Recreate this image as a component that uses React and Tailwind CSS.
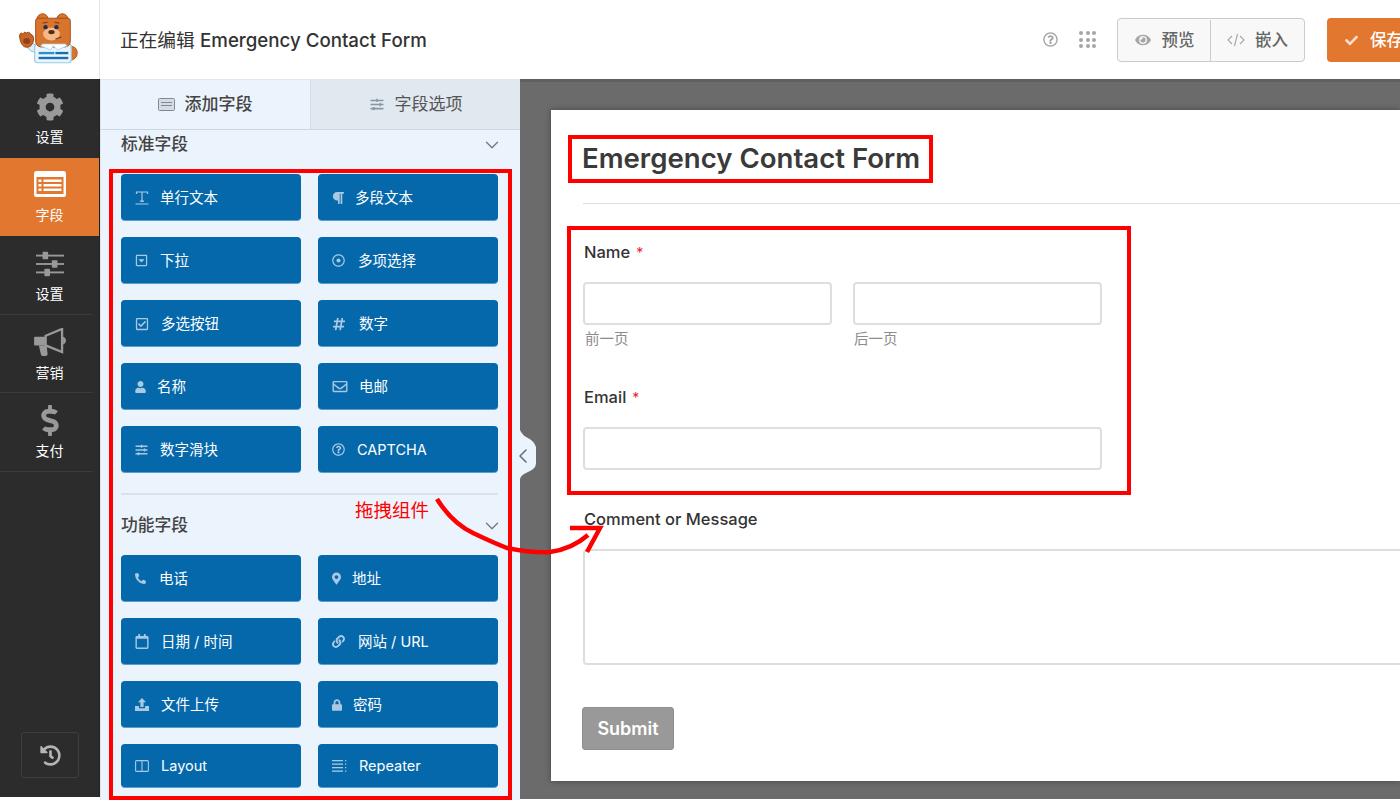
import React from "react";
import {
  FaCog, FaSlidersH, FaDollarSign, FaHistory, FaParagraph, FaHashtag, FaUser,
  FaPhoneAlt, FaMapMarkerAlt, FaLink, FaLock, FaEye, FaCheck,
} from "react-icons/fa";
import { FaRegCaretSquareDown, FaRegDotCircle, FaRegCheckSquare, FaRegEnvelope, FaRegQuestionCircle, FaRegCalendar } from "react-icons/fa";
import { ChevronDown, ChevronLeft } from "lucide-react";

const FieldsIcon = ({ className, fg = "#e27730" }) => (
  <svg viewBox="0 0 32 26" className={className}>
    <rect x="0" y="0" width="32" height="26" rx="2.5" fill="currentColor" />
    <rect x="2.5" y="6" width="27" height="17" fill={fg} />
    <g fill="currentColor">
      <rect x="4.5" y="8.5" width="3" height="2.5" /><rect x="9.5" y="8.5" width="18" height="2.5" />
      <rect x="4.5" y="13" width="3" height="2.5" /><rect x="9.5" y="13" width="18" height="2.5" />
      <rect x="4.5" y="17.5" width="3" height="2.5" /><rect x="9.5" y="17.5" width="18" height="2.5" />
    </g>
  </svg>
);

const Sliders = ({ className }) => (
  <svg viewBox="0 0 30 26" className={className} fill="currentColor">
    <rect x="0" y="3" width="30" height="2" /><rect x="0" y="12" width="30" height="2" /><rect x="0" y="21" width="30" height="2" />
    <rect x="7" y="0" width="6" height="8" rx="1" /><rect x="17" y="9" width="6" height="8" rx="1" /><rect x="9" y="18" width="6" height="8" rx="1" />
  </svg>
);

const Horn = ({ className }) => (
  <svg viewBox="0 0 33 29" className={className} fill="currentColor">
    <path d="M1 9h11v9H1q-1 0-1-1v-7q0-1 1-1z" />
    <path d="M5 18h8l1 9q0 2-2 2H9q-2 0-2-2z" />
    <path d="M12 8L29 1v24L12 18z" fill="none" stroke="currentColor" strokeWidth="2.4" />
    <path d="M30 9q3 1 3 4t-3 4z" />
  </svg>
);

const Code = ({ className }) => (
  <svg viewBox="0 0 18 14" className={className} fill="none" stroke="currentColor" strokeWidth="1.1">
    <path d="M5 3L1 7l4 4M13 3l4 4-4 4M10.5 1L7.5 13" />
  </svg>
);

const TextLine = ({ className }) => (
  <svg viewBox="0 0 14 14" className={className} fill="none" stroke="currentColor" strokeWidth="1.2">
    <path d="M1.5 3V1h11v2M7 1v10M5 10.2h4M0.5 13h13" />
  </svg>
);
const Upload = ({ className }) => (
  <svg viewBox="0 0 14 13" className={className} fill="currentColor">
    <path d="M7 0l4 4.2H8.6V9H5.4V4.2H3z" /><path d="M0 8h4v2.2h6V8h4v5H0z" />
  </svg>
);
const LayoutIc = ({ className }) => (
  <svg viewBox="0 0 14 12" className={className} fill="none" stroke="currentColor" strokeWidth="1.1">
    <rect x="0.6" y="0.6" width="12.8" height="10.8" rx="1" /><path d="M7 0.6v10.8" />
  </svg>
);
const RepeaterIc = ({ className }) => (
  <svg viewBox="0 0 15 12" className={className} fill="currentColor">
    <rect x="0" y="0" width="11" height="1.3" /><rect x="0" y="3.5" width="11" height="1.3" /><rect x="0" y="7" width="11" height="1.3" /><rect x="0" y="10.5" width="11" height="1.3" />
    <rect x="13" y="0" width="1.3" height="1.3" /><rect x="13" y="3.5" width="1.3" height="1.3" /><rect x="13" y="7" width="1.3" height="1.3" /><rect x="13" y="10.5" width="1.3" height="1.3" />
  </svg>
);

const standard = [
  { t: "单行文本", I: TextLine, box: "w-[15px]", ic: "w-[14px] h-[14px]" },
  { t: "多段文本", I: FaParagraph, box: "w-[13px]", ic: "w-[12px] h-[14px]" },
  { t: "下拉", I: FaRegCaretSquareDown, box: "w-[15px]", ic: "w-[13px] h-[13px]" },
  { t: "多项选择", I: FaRegDotCircle, box: "w-[16px]", ic: "w-[13px] h-[13px]" },
  { t: "多选按钮", I: FaRegCheckSquare, box: "w-[16px]", ic: "w-[14px] h-[14px]" },
  { t: "数字", I: FaHashtag, box: "w-[17px]", ic: "w-[14px] h-[14px]" },
  { t: "名称", I: FaUser, box: "w-[12px]", ic: "w-[11px] h-[12px]" },
  { t: "电邮", I: FaRegEnvelope, box: "w-[17px]", ic: "w-[16px] h-[15px]" },
  { t: "数字滑块", I: FaSlidersH, box: "w-[15px]", ic: "w-[13px] h-[12px]" },
  { t: "CAPTCHA", I: FaRegQuestionCircle, box: "w-[15px]", ic: "w-[13px] h-[13px]" },
];
const fancy = [
  { t: "电话", I: FaPhoneAlt, box: "w-[14px]", ic: "w-[11px] h-[11px]" },
  { t: "地址", I: FaMapMarkerAlt, box: "w-[10px]", ic: "w-[9px] h-[13px]" },
  { t: "日期 / 时间", I: FaRegCalendar, box: "w-[16px]", ic: "w-[14px] h-[15px]" },
  { t: "网站 / URL", I: FaLink, box: "w-[16px]", ic: "w-[13px] h-[13px]" },
  { t: "文件上传", I: Upload, box: "w-[16px]", ic: "w-[14px] h-[13px]" },
  { t: "密码", I: FaLock, box: "w-[11px]", ic: "w-[10px] h-[12px]" },
  { t: "Layout", I: LayoutIc, box: "w-[16px]", ic: "w-[14px] h-[12px]" },
  { t: "Repeater", I: RepeaterIc, box: "w-[17px]", ic: "w-[15px] h-[12px]" },
];

const FieldBtn = ({ f, last }) => (
  <div className={`flex items-center pl-[14px] pt-px rounded-[4px] bg-[#0468ab] shadow-[0_1px_0_#5b9ccb] text-white text-[14.5px] ${last ? "h-[43px]" : "h-[46px]"}`}>
    <span className={`${f.box} mr-[10px] flex items-center text-[#a9c9e3] shrink-0`}>
      <f.I className={f.ic} />
    </span>
    <span>{f.t}</span>
  </div>
);

const Nav = ({ label, icon, active, h, line = true }) => (
  <div className={`${h} flex flex-col items-center justify-start text-white text-[14px] relative ${active ? "bg-[#e27730]" : ""}`}>
    {icon}
    <span className="leading-[18px]">{label}</span>
    {line && <div className="absolute left-0 right-[6px] bottom-0 h-px bg-[#3b3b3b]" />}
  </div>
);

const Bear = () => (
  <svg viewBox="0 0 100 79" className="w-[100px] h-[79px]">
    <path d="M69 46q9 0 9 7t-9 8z" fill="#d9742c" stroke="#b05518" strokeWidth="1" />
    <circle cx="43" cy="19" r="5.5" fill="#d9742c" stroke="#a84e15" />
    <circle cx="63" cy="19" r="5.5" fill="#d9742c" stroke="#a84e15" />
    <path d="M27 46q3 7 10 6l1-6-6-3z" fill="#dcedf6" stroke="#8fc3dc" />
    <path d="M20 38q-1-5 2-5l1 1 2-2 2 1 2-1 2 2q3 1 3 5t-3 7q-2 2-6 1-4-2-5-9z" fill="#c8642a" stroke="#9a4a14" />
    <ellipse cx="27" cy="41" rx="3.5" ry="3" fill="#8e4318" />
    <rect x="35" y="44" width="37" height="19" rx="3" fill="#eaf5fb" stroke="#9ccbe3" strokeWidth="1.2" />
    <path d="M38 18h31q2 0 2 3v20q0 5-5 6H41q-5-1-5-6V21q0-3 2-3z" fill="#d9742c" stroke="#a84e15" />
    <path d="M41 46l10 4 3-4 4 4 10-4-2-2H43z" fill="#ffffff" stroke="#9ccbe3" strokeWidth=".8" />
    <ellipse cx="52" cy="34" rx="8.5" ry="6.5" fill="#f3b988" />
    <ellipse cx="52" cy="32" rx="3.2" ry="2.2" fill="#5a2a16" />
    <circle cx="46" cy="27" r="2.2" fill="#1d2f55" /><circle cx="57" cy="27" r="2.2" fill="#1d2f55" />
    <path d="M43 23l5-1M55 22l5 1" stroke="#6b3313" strokeWidth="1" />
    <path d="M56 39l6-2" stroke="#6b3313" strokeWidth="1" />
    <rect x="39" y="52" width="16" height="2.4" fill="#2b8fd6" /><rect x="56" y="52" width="13" height="2.4" fill="#1a6fb3" />
    <rect x="39" y="57" width="30" height="2.4" fill="#1a6fb3" />
  </svg>
);

const Req = () => <span className="text-[#e8262a] ml-[6px] text-[14px] leading-none font-normal">*</span>;

export default function App() {
  return (
    <div className="relative w-[1400px] h-[800px] overflow-hidden bg-white font-['Inter','Noto_Sans_CJK_SC',sans-serif] text-[#333]">
      {/* header */}
      <header className="flex items-center h-[79px] bg-white">
        <div className="w-[100px] h-[79px] border-r border-[#e5e5e5] flex items-center shrink-0"><Bear /></div>
        <div className="ml-[20px] pt-[3px] text-[18.7px] text-[#333]">正在编辑 <span className="font-medium">Emergency Contact Form</span></div>
        <div className="ml-auto flex items-center">
          <FaRegQuestionCircle className="w-[15px] h-[15px] text-[#a6a6a6]" />
          <div className="ml-[21px] grid grid-cols-3 gap-[2.5px]">
            {Array.from({ length: 9 }).map((_, i) => <span key={i} className="w-[4px] h-[4px] rounded-full bg-[#a6a6a6]" />)}
          </div>
          <div className="ml-[21px] flex h-[44px] w-[188px] pt-px bg-[#f8f8f8] border border-[#ccc] rounded-[4px] text-[16.5px] text-[#666] font-medium">
            <div className="w-[93px] flex items-center justify-center gap-[10px] border-r border-[#ccc]">
              <FaEye className="w-[18px] h-[14px] text-[#a6a6a6]" />预览
            </div>
            <div className="flex-1 flex items-center justify-center gap-[10px]">
              <Code className="w-[18px] h-[14px] text-[#a6a6a6]" />嵌入
            </div>
          </div>
          <div className="ml-[22px] w-[73px] h-[44px] pt-px bg-[#e27730] rounded-l-[4px] flex items-center pl-[18px] gap-[12px] text-white text-[16.5px] font-medium whitespace-nowrap">
            <FaCheck className="w-[13px] h-[13px] text-[#f8dcc8] shrink-0" />保存
          </div>
        </div>
      </header>

      <div className="flex h-[721px]">
        {/* sidebar */}
        <aside className="w-[100px] h-[718px] shrink-0 bg-[#2c2c2c] border-r border-[#222] flex flex-col relative">
          <Nav h="h-[79px]" label="设置" line={false} icon={<FaCog className="w-[28px] h-[28px] text-[#999] mt-[14px] mb-[7px]" />} />
          <Nav h="h-[78px]" label="字段" active line={false} icon={<FieldsIcon className="w-[32px] h-[26px] text-white mt-[13px] mb-[9px]" />} />
          <Nav h="h-[79px]" label="设置" icon={<Sliders className="w-[28px] h-[26px] text-[#999] mt-[15px] mb-[8px]" />} />
          <Nav h="h-[78px]" label="营销" icon={<Horn className="w-[32px] h-[28px] text-[#999] mt-[13px] mb-[8px]" />} />
          <Nav h="h-[79px]" label="支付" icon={<FaDollarSign className="w-[24px] h-[31px] text-[#999] mt-[12px] mb-[6px]" />} />
          <div className="absolute left-[21px] bottom-[19px] w-[58px] h-[46px] border border-[#3e3e3e] rounded-[3px] flex items-center justify-center">
            <FaHistory className="w-[21px] h-[21px] text-[#b5b5b5]" />
          </div>
        </aside>

        {/* field panel */}
        <section className="w-[420px] shrink-0 bg-[#ebf3fc] border-l border-t border-[#dfe6ee] relative z-10 h-[721px]">
          <div className="flex h-[50px] border-b border-[#ced7e0] -ml-px text-[17px]">
            <div className="w-[210px] flex items-center justify-center gap-[10px] font-medium text-[#444]">
              <svg viewBox="0 0 17 13" className="w-[17px] h-[13px]"><rect x=".5" y=".5" width="16" height="12" rx="1" fill="#d5dce4" stroke="#7f8a96" /><rect x="3" y="4" width="11" height="1" fill="#7f8a96" /><rect x="3" y="7" width="11" height="1" fill="#7f8a96" /></svg>
              添加字段
            </div>
            <div className="flex-1 bg-[#e0e8f0] border-l border-[#d3dce5] flex items-center justify-center gap-[10px] text-[#555]">
              <FaSlidersH className="w-[16px] h-[13px] text-[#8b95a0]" />字段选项
            </div>
          </div>
          <div className="px-[20px]">
            <div className="h-[28px] pt-[2px] w-[377px] flex items-center justify-between text-[16.8px] font-medium text-[#444]">
              <span>标准字段</span>
              <ChevronDown strokeWidth={1.4} className="w-[22px] h-[22px] text-[#777] mr-[-4.5px]" />
            </div>
            <div className="mt-[16px] grid grid-cols-[180px_180px] gap-x-[17px] gap-y-[17px]">
              {standard.map((f) => <FieldBtn key={f.t} f={f} />)}
            </div>
            <div className="mt-[21px] h-[2px] w-[377px] bg-[#d9e2ec]" />
            <div className="h-[60px] pt-[2px] w-[377px] flex items-center justify-between text-[16.8px] font-medium text-[#444]">
              <span>功能字段</span>
              <ChevronDown strokeWidth={1.4} className="w-[22px] h-[22px] text-[#777] mr-[-4.5px]" />
            </div>
            <div className="grid grid-cols-[180px_180px] gap-x-[17px] gap-y-[17px]">
              {fancy.map((f, i) => <FieldBtn key={f.t} f={f} last={i >= 6} />)}
            </div>
          </div>
        </section>

        {/* preview */}
        <main className="flex-1 min-w-0 bg-[#6b6b6b] pt-[31px] pl-[31px] h-[720px] relative">
          <div className="absolute left-0 top-0 right-0 h-[3px] bg-[#5f5f5f]" />
          <div className="h-[671px] bg-white pt-[26px] pl-[32px] shadow-[0_0_6px_rgba(0,0,0,0.35)] overflow-hidden">
            <h1 className="text-[27.6px] leading-[44px] font-semibold text-[#3a3a3a] -ml-px">Emergency Contact Form</h1>
            <div className="mt-[23px] h-px bg-[#ddd]" />
            <div className="mt-[38px] ml-px text-[16.5px] leading-[20px] font-medium text-[#333]">Name<Req /></div>
            <div className="mt-[20px] flex gap-[21px]">
              <div className="w-[249px]">
                <div className="h-[43px] border-2 border-[#dedede] rounded-[4px] bg-white" />
                <div className="mt-[4px] ml-[2px] text-[14.5px] leading-[20px] text-[#8c8c8c]">前一页</div>
              </div>
              <div className="w-[249px]">
                <div className="h-[43px] border-2 border-[#dedede] rounded-[4px] bg-white" />
                <div className="mt-[4px] ml-px text-[14.5px] leading-[20px] text-[#8c8c8c]">后一页</div>
              </div>
            </div>
            <div className="mt-[38px] ml-px text-[16.5px] leading-[20px] font-medium text-[#333]">Email<Req /></div>
            <div className="mt-[20px] w-[519px] h-[43px] border-2 border-[#dedede] rounded-[4px]" />
            <div className="mt-[39px] ml-px text-[16.5px] leading-[20px] font-medium text-[#333]">Comment or Message</div>
            <div className="mt-[20px] w-[900px] h-[116px] border-2 border-[#dedede] rounded-[4px]" />
            <div className="mt-[42px] -ml-px w-[92px] h-[43px] bg-[#999] border border-[#8f8f8f] rounded-[3px] flex items-center justify-center text-white text-[18px] font-semibold">Submit</div>
          </div>
        </main>
      </div>

      {/* panel collapse tab */}
      <svg viewBox="0 0 16 50" className="absolute left-[520px] top-[430px] w-[16px] h-[50px] z-20">
        <path d="M0 0q2 5 8 8t8 9v16q0 6-8 9t-8 8z" fill="#ebf3fc" />
      </svg>
      <ChevronLeft strokeWidth={1.5} className="absolute left-[511px] top-[444px] w-[24px] h-[24px] text-[#5f6b78] z-20" />

      {/* annotations */}
      <div className="absolute left-[109px] top-[169px] w-[403px] h-[631px] border-[4px] border-[#fe0000] z-30" />
      <div className="absolute left-[568px] top-[135px] w-[365px] h-[48px] border-[4px] border-[#fe0000] z-30" />
      <div className="absolute left-[567px] top-[226px] w-[564px] h-[269px] border-[4px] border-[#fe0000] z-30" />
      <div className="absolute left-[355px] top-[498px] text-[18.5px] leading-[24px] text-[#f00] z-30">拖拽组件</div>
      <svg viewBox="0 0 1400 800" className="absolute left-0 top-0 w-[1400px] h-[800px] z-30 pointer-events-none" fill="none" stroke="#f00" strokeWidth="4.5">
        <path d="M437 499q15 24 36 34t34 15q25 5 43 4 22-3 38-17" />
        <path d="M570 528h30l-13 24" strokeWidth="4.5" />
      </svg>
    </div>
  );
}
